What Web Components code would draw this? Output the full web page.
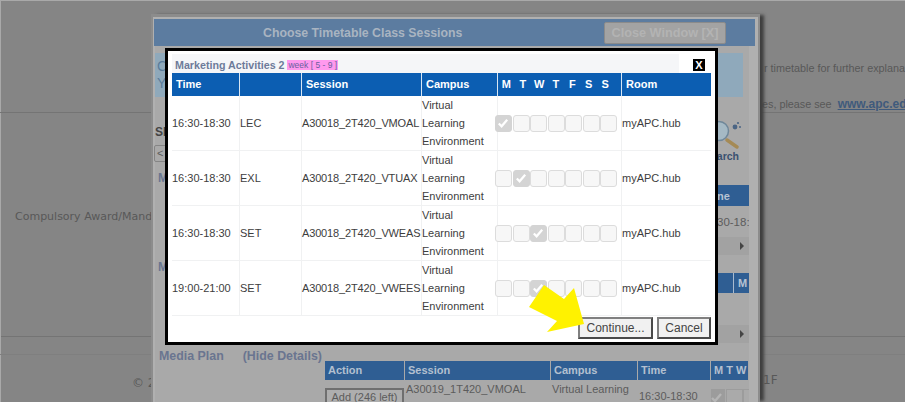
<!DOCTYPE html>
<html>
<head>
<meta charset="utf-8">
<title>Choose Timetable Class Sessions</title>
<style>
  html, body { margin: 0; padding: 0; height: 402px; overflow: hidden; background: #858585; }
</style>
</head>
<body>
<back-page></back-page>
<timetable-window></timetable-window>

<script>
class BackPage extends HTMLElement {
  constructor () {
    super()
    this.shadow = this.attachShadow({ mode: 'open' })
  }
  connectedCallback () {
    this.shadow.innerHTML = /*html*/`
      <style>
        :host {
          display: block;
          position: relative;
          height: 402px;
          overflow: hidden;
          background: #858585;
          border-top: 1px solid #a9a9a9;
          box-sizing: border-box;
          font: 10.8px "Liberation Sans", sans-serif;
          color: #585858;
        }
        .edge { position: absolute; left: 0; top: 0; bottom: 0; width: 1px; background: #a9a9a9; }
        .main {
          display: grid;
          grid-template-rows: 112px 224px 1fr;
          height: 100%;
        }
        .top { border-bottom: 1px solid #747474; position: relative; }
        .mid { border-bottom: 1px solid #747474; display: flex; align-items: center; padding: 0 0 16px 15px; font: 11px "DejaVu Sans", sans-serif; white-space: nowrap; }
        .foot { position: relative; }
        .foot::before { content: ""; display: block; height: 17px; border-bottom: 1px solid #7f7f7f; }
        .note { position: absolute; white-space: nowrap; }
        .note.a { top: 61px; left: 764px; }
        .note.b { top: 96px; left: 762px; }
        a { color: #3f5a7c; font: bold 12px "Liberation Sans", sans-serif; margin-left: 3px; }
        .copy { position: absolute; white-space: nowrap; font: 12px "DejaVu Sans", sans-serif; top: 39px; left: 132px; }
        .floor { position: absolute; white-space: nowrap; font: 12px "DejaVu Sans", sans-serif; top: 36px; left: 763px; }
      </style>
      <div class="edge"></div>
      <div class="main">
        <div class="top">
          <div class="note a">r timetable for further explana</div>
          <div class="note b">es, please see <a href="#">www.apc.edu</a></div>
        </div>
        <div class="mid">Compulsory Award/Mand</div>
        <div class="foot">
          <div class="copy">© 2</div>
          <div class="floor">1F</div>
        </div>
      </div>
    `
  }
}

class TimetableWindow extends HTMLElement {
  constructor () {
    super()
    this.shadow = this.attachShadow({ mode: 'open' })
  }
  connectedCallback () {
    this.shadow.innerHTML = /*html*/`
      <style>
        :host {
          display: block;
          position: absolute;
          left: 151px;
          top: 14px;
          width: 609px;
          height: 388px;
          box-sizing: border-box;
          background: #b0b0b0;
          border: solid #8c8c8c;
          border-width: 3px 2px 0 2px;
          box-shadow: 5px 0 3px -1px #3f3f3f;
          font: 11px "Liberation Sans", sans-serif;
          color: #5c5c5c;
        }
        .wrap { padding: 2px 3px 0 1px; height: 100%; box-sizing: border-box; overflow: hidden; }
        .head {
          height: 27px;
          background: #5c7ca0;
          display: flex;
          align-items: center;
          color: #a9b4c1;
          font-weight: bold;
          font-size: 12.3px;
          position: relative;
        }
        .head .t { position: absolute; left: 109px; }
        .close {
          position: absolute;
          left: 450px;
          top: 3px;
          width: 122px;
          height: 22px;
          background: #a3a3a3;
          border: 1px solid #8b8b8b;
          border-radius: 2px;
          box-sizing: border-box;
          color: #b3b3b3;
          font-weight: bold;
          font-size: 12.7px;
          display: flex;
          align-items: center;
          justify-content: center;
        }
        .body { width: 594px; height: 400px; margin-left: 1px; background: #a9a9a9; padding-top: 7px; box-sizing: border-box; }
        .info {
          height: 44px;
          width: 588px;
          background: #8fa9bb;
          color: #5b7c9a;
          font-size: 14px;
          line-height: 17px;
          padding: 5px 0 0 2px;
          box-sizing: border-box;
        }
        .tools { position: relative; height: 88px; }
        .sh { position: absolute; left: 0; top: 28px; font-size: 12px; font-weight: bold; color: #444; }
        .sel {
          position: absolute; left: -1px; top: 48px; width: 20px; height: 17px;
          border: 1px solid #858585; border-radius: 2px; box-sizing: border-box;
          padding-left: 2px; line-height: 14px;
        }
        .m { position: absolute; left: 3px; font-size: 12px; font-weight: bold; color: #6a7590; }
        .search { position: absolute; left: 555px; top: 22px; width: 38px; height: 41px; }
        .search svg { display: block; }
        .search span { position: absolute; left: -6px; top: 31px; font-size: 10.5px; font-weight: bold; color: #3a5170; }
        .stub { position: absolute; left: 562px; width: 32px; }
        .stub .bar { background: #2f5e93; color: #b7c3d2; font-weight: bold; display: flex; align-items: center; position: relative; white-space: nowrap; }
        .stub .cell { display: flex; align-items: center; white-space: nowrap; overflow: hidden; font-size: 11.5px; }
        .stub .pager { height: 18px; background: #a2a2a2; position: relative; }
        .stub .pager::after {
          content: ""; position: absolute; left: 23px; top: 5px;
          border-left: 4px solid #454545; border-top: 4px solid transparent; border-bottom: 4px solid transparent;
        }
        .divider { position: absolute; left: 16px; top: 0; bottom: 0; width: 1px; background: #a9bbd0; }
        .plan { margin-top: 164px; display: flex; height: 20px; padding-left: 4px; font-size: 12.4px; font-weight: bold; color: #6a7590; white-space: nowrap; }
        .plan b:last-child { margin-left: 19px; }
        .sessions {
          margin: -8px 0 0 170px;
          width: 424px;
          display: grid;
          grid-template-columns: 80px 146px 87px 73px 38px;
          overflow: hidden;
        }
        .sessions .h { background: #2f5e93; color: #b3c0d0; font-weight: bold; height: 19px; line-height: 19px; padding-left: 3px; margin-right: 1px; white-space: nowrap; overflow: hidden; box-sizing: border-box; }
        .sessions .h:last-child { margin-right: 0; padding-left: 4px; word-spacing: 3px; }
        .c { padding-left: 1px; line-height: 18px; white-space: nowrap; overflow: hidden; height: 40px; box-sizing: border-box; }
        .add {
          display: block; margin: 8px 0 0 -1px; width: 79px; height: 18px; box-sizing: border-box;
          border: 2px solid #6f6f6f; background: #aeaeae; text-align: center; line-height: 14px; color: #5c5c5c;
        }
        .mini { display: flex; margin: 9px 0 0 -4px; }
        .mini i { width: 17px; height: 17px; box-sizing: border-box; border: 1px solid #9c9c9c; margin-right: .5px; background: #aaa; flex: none; }
        .mini i:first-child { background: #9c9c9c; }
        .mini svg { display: block; }
      </style>
      <div class="wrap">
        <div class="head">
          <span class="t">Choose Timetable Class Sessions</span>
          <span class="close">Close Window [X]</span>
        </div>
        <div class="body">
          <div class="info">C<br>Y</div>
          <div class="tools">
            <div class="sh">Sh</div>
            <div class="sel">&lt;</div>
            <div class="m" style="top:74px">M</div>
            <div class="search">
              <svg width="38" height="32" viewBox="0 0 38 32">
                <circle cx="9" cy="12" r="9.5" fill="#a5b9c4" stroke="#6f8799" stroke-width="1.5"/>
                <path d="M17 21 L27 28" stroke="#a58a55" stroke-width="3.5" stroke-linecap="round"/>
                <circle cx="25" cy="8" r="2.4" fill="#4b6584"/><circle cx="28" cy="4" r="1.1" fill="#4b6584"/><circle cx="30" cy="8" r="1" fill="#4b6584"/>
              </svg>
              <span>Search</span>
            </div>
            <div class="stub" style="top:88px">
              <div class="bar" style="height:21px">ne</div>
              <div class="cell" style="height:31px">30-18:30</div>
              <div class="pager"></div>
            </div>
            <div class="stub" style="top:176px">
              <div class="bar" style="height:20px;padding-left:21px">M<span class="divider"></span></div>
              <div class="cell" style="height:32px"></div>
              <div class="pager"></div>
            </div>
            <div class="m" style="top:163px">M</div>
          </div>
          <div class="plan"><b>Media Plan</b><b>(Hide Details)</b></div>
          <div class="sessions">
            <div class="h">Action</div><div class="h">Session</div><div class="h">Campus</div><div class="h">Time</div><div class="h">M T W</div>
            <div class="c"><span class="add">Add (246 left)</span></div>
            <div class="c">A30019_1T420_VMOAL</div>
            <div class="c">Virtual Learning<br>Environment</div>
            <div class="c" style="padding-top:7px">16:30-18:30</div>
            <div class="c"><div class="mini"><i><svg width="15" height="15" viewBox="0 0 15 15"><path d="M3 8 L6 11 L12 4" fill="none" stroke="#b5b5b5" stroke-width="2.4"/></svg></i><i></i><i></i></div></div>
          </div>
        </div>
      </div>
      <session-dialog></session-dialog>
    `
  }
}

class SessionDialog extends HTMLElement {
  constructor () {
    super()
    this.shadow = this.attachShadow({ mode: 'open' })
  }
  connectedCallback () {
    this.shadow.innerHTML = /*html*/`
      <style>
        :host {
          display: block;
          position: absolute;
          left: 12px;
          top: 31px;
          width: 553px;
          height: 297px;
          box-sizing: border-box;
          background: #fff;
          border: 3px solid #000;
          padding: 3px 6px 0 4px;
          font: 11px "Liberation Sans", sans-serif;
          color: #333;
        }
        .title {
          display: flex;
          align-items: center;
          height: 19px;
          width: 507px;
          background: #f5f6f8;
          padding: 3px 0 0 3px;
          box-sizing: border-box;
          color: #6d7b9a;
          font-weight: bold;
          font-size: 10.7px;
          white-space: nowrap;
        }
        .wk { background: #ff99ee; color: #6b5f9e; font-size: 8.5px; margin-left: 3px; padding: 0 1px; font-weight: normal; line-height: 10px; }
        .x {
          position: absolute; left: 525px; top: 8px; width: 12px; height: 12px;
          background: #000; color: #fff; font: bold 11px/12px "Liberation Sans", sans-serif; text-align: center;
        }
        .cols {
          display: grid;
          grid-template-columns: 68px 62px 120px 76px 124px 89px;
          width: 539px;
        }
        .cols span {
          background: #0c5eb2; color: #fff; font-weight: bold; height: 23px; line-height: 22px;
          padding-left: 4px; box-sizing: border-box; border-right: 1px solid #d8e6f3;
        }
        .cols span:last-child { border-right: 0; }
        .cols .days { display: grid; grid-template-columns: repeat(7, 16.5px); padding-left: 0; text-align: center; }
        .days b { display: block; }
        .foot {
          display: flex;
          justify-content: flex-end;
          gap: 4px;
          width: 539px;
          margin-top: 1px;
        }
        .btn {
          height: 22px; box-sizing: border-box; border: 2px solid #4a4a4a; border-top-color: #808080; border-left-color: #808080;
          background: #f1f1f1; color: #444; font-size: 12px; line-height: 18px; text-align: center;
        }
        .arrow { position: absolute; left: 361px; top: 234px; }
      </style>
      <div class="title">Marketing Activities 2<span class="wk">week [ 5 - 9 ]</span></div>
      <div class="x">X</div>
      <div class="cols">
        <span>Time</span><span></span><span>Session</span><span>Campus</span>
        <span class="days"><b>M</b><b>T</b><b>W</b><b>T</b><b>F</b><b>S</b><b>S</b></span>
        <span>Room</span>
      </div>
      <session-row time="16:30-18:30" kind="LEC" code="A30018_2T420_VMOAL" day="0"></session-row>
      <session-row time="16:30-18:30" kind="EXL" code="A30018_2T420_VTUAX" day="1"></session-row>
      <session-row time="16:30-18:30" kind="SET" code="A30018_2T420_VWEAS" day="2"></session-row>
      <session-row time="19:00-21:00" kind="SET" code="A30018_2T420_VWEES" day="2"></session-row>
      <div class="foot">
        <div class="btn" style="width:75px">Continue...</div>
        <div class="btn" style="width:54px">Cancel</div>
      </div>
      <svg class="arrow" width="58" height="50" viewBox="0 0 58 50">
        <polygon points="0,22 15,0 35,14 45,3 55,39 18,47 28,36" fill="#fff200"/>
      </svg>
    `
  }
}

class SessionRow extends HTMLElement {
  constructor () {
    super()
    this.shadow = this.attachShadow({ mode: 'open' })
  }
  connectedCallback () {
    const a = n => this.getAttribute(n)
    let boxes = ''
    for (let i = 0; i < 7; i++) {
      boxes += +a('day') === i
        ? '<i class="on"><svg width="14" height="14" viewBox="0 0 15 15"><path d="M3 8 L6 11 L12 4" fill="none" stroke="#fff" stroke-width="2.4"/></svg></i>'
        : '<i></i>'
    }
    this.shadow.innerHTML = /*html*/`
      <style>
        :host {
          display: grid;
          grid-template-columns: 68px 62px 120px 76px 124px 89px;
          width: 539px;
          height: 55px;
          box-sizing: border-box;
          border-bottom: 1px solid #f0f1f2;
          font: 11px "Liberation Sans", sans-serif;
          color: #3d3d3d;
        }
        div { display: flex; align-items: center; border-right: 1px solid #f0f1f2; white-space: nowrap; }
        div:last-child { border-right: 0; }
        .code { letter-spacing: -.15px; }
        .campus { line-height: 18px; white-space: normal; }
        .week span { display: flex; gap: .5px; margin-left: -3px; }
        i {
          display: block; width: 17px; height: 17px; box-sizing: border-box;
          border: 1.5px solid #dcdcdc; border-radius: 3px; background: #f7f7f7; flex: none;
        }
        i.on { background: #d4d4d4; border-color: #d4d4d4; }
        svg { display: block; }
      </style>
      <div>${a('time')}</div>
      <div>${a('kind')}</div>
      <div class="code">${a('code')}</div>
      <div class="campus">Virtual<br>Learning<br>Environment</div>
      <div class="week"><span>${boxes}</span></div>
      <div>myAPC.hub</div>
    `
  }
}

customElements.define('session-row', SessionRow)
customElements.define('session-dialog', SessionDialog)
customElements.define('timetable-window', TimetableWindow)
customElements.define('back-page', BackPage)
</script>
</body>
</html>
